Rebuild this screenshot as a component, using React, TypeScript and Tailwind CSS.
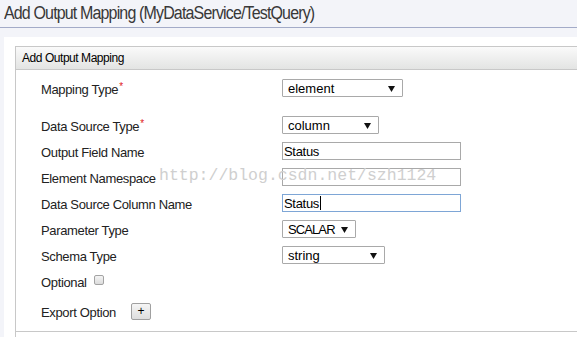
import React from "react";

const Arrow = () => (
  <svg width="7" height="7" viewBox="0 0 7 7" className="shrink-0">
    <path d="M0 1 L7 1 L3.5 7 Z" fill="#111" />
  </svg>
);

const Select = ({ value, w, tcls }: { value: string; w: string; tcls?: string }) => (
  <div
    className={`${w} h-[18px] border border-[#a9a9a9] bg-white flex items-center justify-between pl-[5px] pr-[7px] text-[13px] text-black rounded-[1px]`}
    style={{ fontFamily: "'Liberation Sans', Arial, sans-serif" }}
  >
    <span className={`leading-none ${tcls ?? ""}`}>{value}</span>
    <Arrow />
  </div>
);

const Input = ({ value, focused, caret }: { value?: string; focused?: boolean; caret?: boolean }) => (
  <div
    className={`w-[179px] h-[18px] border ${
      focused ? "border-[#7ea6d6]" : "border-[#a9a9a9]"
    } bg-white flex items-center pl-[1px] text-[13px] text-black`}
    style={{ fontFamily: "'Liberation Sans', Arial, sans-serif" }}
  >
    <span className="leading-none tracking-[-0.3px]">{value}</span>
    {caret && <span className="w-px h-[14px] bg-black ml-[1px]" />}
  </div>
);

const Req = () => <span className="text-[#e02020] text-[10px] relative -top-[4px] ml-[1px]">*</span>;

const Row = ({ label, children, cls }: { label: React.ReactNode; children?: React.ReactNode; cls: string }) => (
  <div className={`flex items-center h-[18px] ${cls}`}>
    <div className="w-[241px] shrink-0 text-[13px] text-[#222] leading-none tracking-[-0.35px] pt-[2px]">{label}</div>
    {children}
  </div>
);

export default function App() {
  return (
    <div
      className="relative w-[577px] h-[337px] overflow-hidden bg-[#f3f4f9]"
      style={{ fontFamily: "'Liberation Sans', Arial, sans-serif" }}
    >
      <div className="h-[28px] border-b border-[#a3abc8] pl-[4px] flex items-start">
        <span className="text-[16px] text-[#383838] leading-none mt-[5px] tracking-[-0.85px] scale-y-110 origin-top">
          Add Output Mapping (MyDataService/TestQuery)
        </span>
      </div>
      <div className="ml-[4px] mt-[9px] bg-white pt-[9px] pl-[11px] h-[300px]">
        <div className="w-[600px] border-l border-[#c8c8c8] h-full">
          <div className="h-[24px] border-t border-b border-[#c8c8c8] bg-gradient-to-b from-[#fafafa] to-[#e3e4e3] flex items-center pl-[6px] text-[12px] text-black tracking-[-0.45px]">
            Add Output Mapping
          </div>
          <div className="pl-[25px] pt-[9px] pb-[11px] border-b border-[#c8c8c8]">
            <Row label={<>Mapping Type<Req /></>} cls="">
              <Select value="element" w="w-[121px]" />
            </Row>
            <Row label={<>Data Source Type<Req /></>} cls="mt-[19px]">
              <Select value="column" w="w-[97px]" />
            </Row>
            <Row label="Output Field Name" cls="mt-[8px]">
              <Input value="Status" />
            </Row>
            <Row label="Element Namespace" cls="mt-[8px]">
              <Input />
            </Row>
            <Row label="Data Source Column Name" cls="mt-[8px]">
              <Input value="Status" focused caret />
            </Row>
            <Row label="Parameter Type" cls="mt-[8px]">
              <Select value="SCALAR" w="w-[74px]" tcls="tracking-[-0.9px]" />
            </Row>
            <Row label="Schema Type" cls="mt-[8px]">
              <Select value="string" w="w-[103px]" />
            </Row>
            <div className="flex items-center h-[18px] mt-[8px]">
              <span className="text-[13px] text-[#222] leading-none tracking-[-0.35px] pt-[2px]">Optional</span>
              <span className="ml-[7px] w-[10px] h-[10px] border border-[#a3a3a3] rounded-[2px] bg-gradient-to-b from-[#f4f4f4] to-[#dcdcdc] -mt-[2px]" />
            </div>
            <div className="flex items-center h-[18px] mt-[12px]">
              <span className="w-[90px] text-[13px] text-[#222] leading-none tracking-[-0.35px] pt-[2px]">Export Option</span>
              <button className="w-[20px] h-[17px] border border-[#a0a0a0] rounded-[2px] bg-gradient-to-b from-[#f5f5f5] to-[#dedede] flex items-center justify-center text-[12px] leading-none text-black">
                +
              </button>
            </div>
          </div>
        </div>
      </div>
      <div
        className="absolute left-[159px] top-[168px] text-[16.5px] leading-none text-[#cfcfcf] pointer-events-none whitespace-nowrap"
        style={{ fontFamily: "'Liberation Mono', 'Courier New', monospace" }}
      >
        http://blog.csdn.net/szh1124
      </div>
    </div>
  );
}
